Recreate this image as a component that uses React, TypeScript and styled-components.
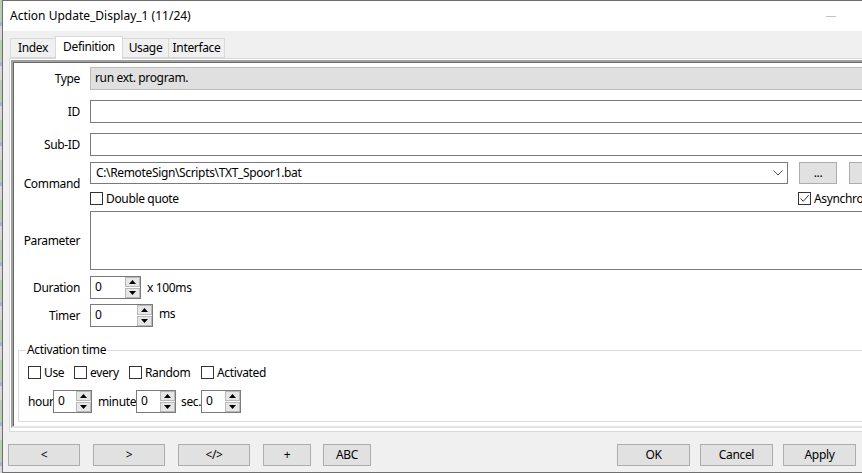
import React from "react";
import styled, { createGlobalStyle } from "styled-components";

const GlobalStyle = createGlobalStyle`
  html, body { margin: 0; padding: 0; overflow: hidden; background: #c9d2c7; }
  body { font-family: "Noto Sans", "Open Sans", sans-serif; font-size: 12px; letter-spacing: -0.35px; color: #000; }
  * { box-sizing: border-box; }
`;

const Screen = styled.div`
  display: flex;
  width: 862px;
  height: 473px;
  overflow: hidden;
`;

const Backdrop = styled.div`
  flex: none;
  width: 2px;
  background: repeating-linear-gradient(180deg, #b9cdb4 0 22px, #9fb7d6 22px 26px, #d7d7d7 26px 40px);
`;

const Window = styled.div`
  flex: none;
  width: 945px;
  height: 473px;
  display: flex;
  flex-direction: column;
  background: #f0f0f0;
  border: 1px solid #6f6f6f;
`;

const TitleBar = styled.div`
  height: 30px;
  flex: none;
  display: flex;
  align-items: center;
  background: #fff;
`;

const Title = styled.div`
  padding-left: 7px;
  font-size: 12px;
  letter-spacing: 0;
  line-height: 16px;
  white-space: nowrap;
`;

const CaptionButtons = styled.div`
  margin-left: auto;
  display: flex;
  height: 100%;
`;

const CaptionButton = styled.div`
  width: 46px;
  height: 100%;
  display: flex;
  align-items: center;
  justify-content: center;
`;

const MinGlyph = styled.span`
  width: 10px;
  height: 1px;
  background: #c2c2c2;
`;

const MaxGlyph = styled.span`
  width: 10px;
  height: 10px;
  border: 1px solid #c2c2c2;
`;

const TabStrip = styled.div`
  height: 27px;
  flex: none;
  display: flex;
  align-items: flex-end;
  padding-left: 7px;
`;

const Tab = styled.div<{ $w: number; $active?: boolean }>`
  position: relative;
  z-index: ${(p) => (p.$active ? 1 : 0)};
  width: ${(p) => p.$w}px;
  height: ${(p) => (p.$active ? 23 : 20)}px;
  margin-bottom: ${(p) => (p.$active ? -1 : 0)}px;
  margin-right: -1px;
  border: 1px solid #d9d9d9;
  border-bottom: ${(p) => (p.$active ? "none" : "1px solid #d9d9d9")};
  background: ${(p) => (p.$active ? "#fff" : "#f0f0f0")};
  display: flex;
  justify-content: center;
  padding-top: ${(p) => (p.$active ? 2 : 1)}px;
  line-height: 16px;
  white-space: nowrap;
`;

const TabPanel = styled.div`
  height: 374px;
  flex: none;
  margin: 0 6px;
  border: 1px solid #d9d9d9;
  background: #fff;
  padding: 1px 1px 3px 1px;
`;

const InnerBox = styled.div`
  height: 368px;
  border-style: solid;
  border-width: 2px;
  border-color: #a0a0a0 #e3e3e3 #e3e3e3 #a0a0a0;
  box-shadow: inset 1px 1px 0 #696969;
  padding: 5px 49px 0 0;
  display: flex;
  flex-direction: column;
  overflow: hidden;
`;

const FieldRow = styled.div<{ $mt?: number }>`
  display: grid;
  grid-template-columns: 67px 1fr;
  column-gap: 10px;
  align-items: center;
  margin-top: ${(p) => p.$mt ?? 0}px;
`;

const Label = styled.div`
  text-align: right;
  white-space: nowrap;
  line-height: 16px;
`;

const TextField = styled.div<{ $h?: number; $disabled?: boolean }>`
  height: ${(p) => p.$h ?? 23}px;
  border: 1px solid ${(p) => (p.$disabled ? "#bcbcbc" : "#7a7a7a")};
  background: ${(p) => (p.$disabled ? "#e0e0e0" : "#fff")};
  padding: 2px 4px 0;
  line-height: 16px;
  white-space: nowrap;
  overflow: hidden;
`;

const CommandBlock = styled.div`
  display: flex;
  flex-direction: column;
`;

const CommandLine = styled.div`
  display: flex;
  align-items: center;
`;

const Combo = styled.div`
  flex: 1;
  height: 22px;
  border: 1px solid #7a7a7a;
  background: #fff;
  display: flex;
  align-items: center;
  padding: 0 4px 0 5px;
  line-height: 16px;
  white-space: nowrap;
`;

const ComboText = styled.span`
  flex: 1;
`;

const SmallButton = styled.div<{ $ml: number }>`
  width: 38px;
  height: 22px;
  margin-left: ${(p) => p.$ml}px;
  border: 1px solid #adadad;
  background: #e1e1e1;
  display: flex;
  align-items: center;
  justify-content: center;
  line-height: 16px;
`;

const OptionLine = styled.div`
  display: flex;
  align-items: center;
  height: 16px;
  margin-top: 6px;
`;

const CheckItem = styled.div<{ $w?: number; $push?: boolean }>`
  display: flex;
  align-items: center;
  gap: 3px;
  height: 16px;
  white-space: nowrap;
  width: ${(p) => (p.$w ? `${p.$w}px` : "auto")};
  margin-left: ${(p) => (p.$push ? "auto" : "0")};
  flex: none;
`;

const Box = styled.span`
  width: 13px;
  height: 13px;
  flex: none;
  border: 1px solid #333;
  background: #fff;
  display: flex;
  align-items: center;
  justify-content: center;
`;

const SpinBox = styled.div<{ $w: number }>`
  width: ${(p) => p.$w}px;
  height: 23px;
  flex: none;
  display: flex;
  border: 1px solid #7a7a7a;
  background: #fff;
`;

const SpinValue = styled.div`
  flex: 1;
  padding: 2px 0 0 4px;
  line-height: 16px;
`;

const SpinArrows = styled.div`
  width: 15px;
  display: flex;
  flex-direction: column;
  gap: 1px;
`;

const SpinArrow = styled.div`
  flex: 1;
  border: 1px solid #b9b9b9;
  background: #e6e6e6;
  display: flex;
  align-items: center;
  justify-content: center;
`;

const InlineRow = styled.div`
  display: flex;
  align-items: center;
`;

const Unit = styled.span<{ $ml: number; $up?: number }>`
  margin-left: ${(p) => p.$ml}px;
  line-height: 16px;
  margin-bottom: ${(p) => (p.$up ?? 0) * 2}px;
  white-space: nowrap;
`;

const GroupBox = styled.fieldset`
  margin: 15px 0 0 5px;
  border: 1px solid #dcdcdc;
  padding: 0 0 8px 9px;
  min-width: 0;
`;

const Legend = styled.legend`
  padding: 0 1px;
  margin-left: -2px;
  line-height: 16px;
  font-size: 12px;
`;

const GroupLine = styled.div<{ $mt: number }>`
  display: flex;
  align-items: center;
  margin-top: ${(p) => p.$mt}px;
`;

const SpinLabel = styled.span<{ $w: number; $ml?: number }>`
  width: ${(p) => p.$w}px;
  margin-left: ${(p) => p.$ml ?? 0}px;
  flex: none;
  line-height: 16px;
  white-space: nowrap;
`;

const ButtonBar = styled.div`
  flex: 1;
  display: flex;
  align-items: flex-start;
  padding: 12px 90px 0 5px;
  gap: 13px;
`;

const PushButton = styled.div<{ $w: number; $ml?: number }>`
  width: ${(p) => p.$w}px;
  height: 22px;
  margin-left: ${(p) => p.$ml ?? 0}px;
  flex: none;
  border: 1px solid #adadad;
  background: #e1e1e1;
  display: flex;
  align-items: center;
  justify-content: center;
  line-height: 16px;
`;

const Spacer = styled.div`
  flex: 1;
`;

const RightButtons = styled.div`
  display: flex;
  gap: 10px;
`;

const Tri: React.FC<{ up?: boolean }> = ({ up }) => (
  <svg width="7" height="4" viewBox="0 0 7 4">
    {up ? <path d="M0 4 L3.5 0 L7 4 Z" fill="#000" /> : <path d="M0 0 L3.5 4 L7 0 Z" fill="#000" />}
  </svg>
);

const Spin: React.FC<{ w: number; value?: string }> = ({ w, value = "0" }) => (
  <SpinBox $w={w}>
    <SpinValue>{value}</SpinValue>
    <SpinArrows>
      <SpinArrow>
        <Tri up />
      </SpinArrow>
      <SpinArrow>
        <Tri />
      </SpinArrow>
    </SpinArrows>
  </SpinBox>
);

const Check: React.FC<{ label: string; checked?: boolean; w?: number; push?: boolean }> = ({
  label,
  checked,
  w,
  push,
}) => (
  <CheckItem $w={w} $push={push}>
    <Box>
      {checked && (
        <svg width="11" height="11" viewBox="0 0 11 11">
          <path d="M1.5 5.5 L4.3 8.3 L9.6 2.2" fill="none" stroke="#333" strokeWidth="1" />
        </svg>
      )}
    </Box>
    <span>{label}</span>
  </CheckItem>
);

const Chevron = () => (
  <svg width="10" height="6" viewBox="0 0 10 6">
    <path d="M0.5 0.5 L5 5 L9.5 0.5" fill="none" stroke="#555" strokeWidth="1" />
  </svg>
);

export default function App() {
  return (
    <>
      <GlobalStyle />
      <Screen>
        <Backdrop />
        <Window>
          <TitleBar>
            <Title>Action Update_Display_1 (11/24)</Title>
            <CaptionButtons>
              <CaptionButton>
                <MinGlyph />
              </CaptionButton>
              <CaptionButton>
                <MaxGlyph />
              </CaptionButton>
              <CaptionButton />
            </CaptionButtons>
          </TitleBar>
          <TabStrip>
            <Tab $w={46}>Index</Tab>
            <Tab $w={68} $active>
              Definition
            </Tab>
            <Tab $w={47}>Usage</Tab>
            <Tab $w={57}>Interface</Tab>
          </TabStrip>
          <TabPanel>
            <InnerBox>
              <FieldRow>
                <Label>Type</Label>
                <TextField $disabled>run ext. program.</TextField>
              </FieldRow>
              <FieldRow $mt={10}>
                <Label>ID</Label>
                <TextField />
              </FieldRow>
              <FieldRow $mt={10}>
                <Label>Sub-ID</Label>
                <TextField />
              </FieldRow>
              <FieldRow $mt={6}>
                <Label>Command</Label>
                <CommandBlock>
                  <CommandLine>
                    <Combo>
                      <ComboText>C:\RemoteSign\Scripts\TXT_Spoor1.bat</ComboText>
                      <Chevron />
                    </Combo>
                    <SmallButton $ml={11}>...</SmallButton>
                    <SmallButton $ml={12} />
                  </CommandLine>
                  <OptionLine>
                    <Check label="Double quote" />
                    <Check label="Asynchronous" checked push w={89} />
                  </OptionLine>
                </CommandBlock>
              </FieldRow>
              <FieldRow $mt={5}>
                <Label>Parameter</Label>
                <TextField $h={59} />
              </FieldRow>
              <FieldRow $mt={6}>
                <Label>Duration</Label>
                <InlineRow>
                  <Spin w={51} />
                  <Unit $ml={6}>x 100ms</Unit>
                </InlineRow>
              </FieldRow>
              <FieldRow $mt={5}>
                <Label>Timer</Label>
                <InlineRow>
                  <Spin w={63} />
                  <Unit $ml={6} $up={2}>
                    ms
                  </Unit>
                </InlineRow>
              </FieldRow>
              <GroupBox>
                <Legend>Activation time</Legend>
                <GroupLine $mt={6}>
                  <Check label="Use" w={46} />
                  <Check label="every" w={55} />
                  <Check label="Random" w={72} />
                  <Check label="Activated" />
                </GroupLine>
                <GroupLine $mt={10}>
                  <SpinLabel $w={25}>hour</SpinLabel>
                  <Spin w={39} />
                  <SpinLabel $w={38} $ml={6}>
                    minute
                  </SpinLabel>
                  <Spin w={40} />
                  <SpinLabel $w={20} $ml={5}>
                    sec.
                  </SpinLabel>
                  <Spin w={40} />
                </GroupLine>
              </GroupBox>
            </InnerBox>
          </TabPanel>
          <ButtonBar>
            <PushButton $w={72}>&lt;</PushButton>
            <PushButton $w={72}>&gt;</PushButton>
            <PushButton $w={72}>&lt;/&gt;</PushButton>
            <PushButton $w={48}>+</PushButton>
            <PushButton $w={48} $ml={-1}>
              ABC
            </PushButton>
            <Spacer />
            <RightButtons>
              <PushButton $w={73}>OK</PushButton>
              <PushButton $w={73}>Cancel</PushButton>
              <PushButton $w={73}>Apply</PushButton>
            </RightButtons>
          </ButtonBar>
        </Window>
      </Screen>
    </>
  );
}
